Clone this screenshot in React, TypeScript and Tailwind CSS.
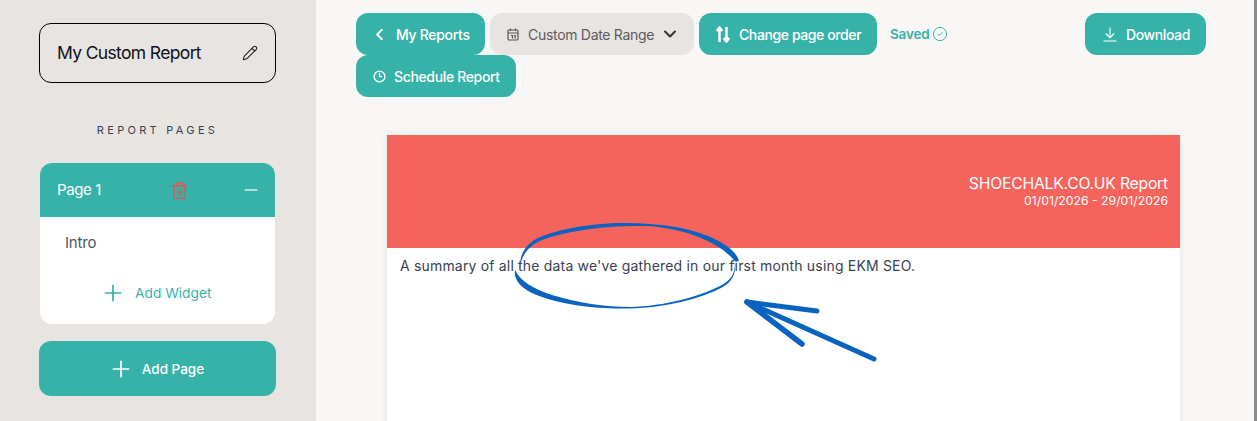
import { ChevronLeft, ChevronDown, Clock3, Pencil, Trash2, Minus, Plus, CircleCheck } from "lucide-react";

const teal = "bg-[#37b2a8]";

function TealButton({ children, className = "" }: { children: React.ReactNode; className?: string }) {
  return (
    <button className={`${teal} h-[42px] rounded-xl flex items-center text-white text-[14px] font-medium ${className}`}>
      {children}
    </button>
  );
}

// hand drawn circle and arrow on top of the report
function Annotation() {
  return (
    <svg className="absolute left-0 top-0 pointer-events-none" width="1257" height="421" fill="none">
      <path
        d="M739 261 C735 245 700 227 650 224 C600 220 560 229 540 237 C526 243 519 255 520 268 C521 256 528 246 542 240 C565 231 605 225 648 226 C688 229 720 243 735 261 Z"
        fill="#0a62c0"
      />
      <path
        d="M515 270 C513 284 528 293 548 299 C575 307 605 309 630 308.5 C665 307.5 700 299 722 287.5 C732 282 736 274 735 264 C735 274 730 281 720 286 C698 297 665 306 630 307 C605 307 578 303 552 295 C534 289 521 282 515 270 Z"
        fill="#0a62c0"
      />
      <path d="M720 247 C729 253 734 259 735 266" stroke="#0a62c0" strokeOpacity="0.35" strokeWidth="0.6" />
      <g stroke="#0a62c0" strokeLinecap="round" strokeLinejoin="round">
        <path d="M747 302 L817 311" strokeWidth="5" />
        <path d="M747 302 L802 344" strokeWidth="5.5" />
        <path d="M747 302 L874 359" strokeWidth="5" />
      </g>
    </svg>
  );
}

export default function App() {
  return (
    <div
      className="relative flex w-[1257px] h-[421px] overflow-hidden bg-[#f8f7f5]"
      style={{ fontFamily: '"Inter", "Liberation Sans", sans-serif' }}
    >
      {/* SIDEBAR */}
      <aside className="w-[316px] shrink-0 bg-[#e8e4e1] pt-[23px] pl-[39px] pr-[40px] flex flex-col">
        <div className="h-[60px] rounded-xl border border-black flex items-center justify-between pl-[17px] pr-[17px] text-[17.5px] tracking-[-0.65px] text-[#0b1220]">
          <span>My Custom Report</span>
          <Pencil size={16} strokeWidth={1.6} className="text-[#222]" />
        </div>

        <p className="mt-[40px] text-center text-[11px] leading-[14px] tracking-[3.3px] text-[#374151]">REPORT PAGES</p>

        <div className="mt-[26px] mx-px rounded-xl overflow-hidden bg-white">
          <div className={`${teal} h-[54px] flex items-center pl-[17px] pr-[14px] text-white text-[15px] tracking-[-0.4px]`}>
            <span className="w-[113px]">Page 1</span>
            <Trash2 size={19} strokeWidth={1.6} className="text-[#ea4f4f]" />
            <Minus size={20} strokeWidth={1.7} className="ml-auto text-white/80" />
          </div>
          <div className="h-[107px] pl-[25px] pt-[17px] flex flex-col">
            <span className="text-[15px] leading-[18px] tracking-[-0.2px] text-[#4b5563]">Intro</span>
            <div className="mt-[28px] ml-[35px] flex items-center gap-[9px] text-[#37b2a8] text-[13.75px]">
              <Plus size={26} strokeWidth={1.6} />
              <span>Add Widget</span>
            </div>
          </div>
        </div>

        <button className={`${teal} mt-[17px] h-[55px] rounded-xl flex items-center justify-center gap-[8px] pr-[3px] text-white text-[13.5px] font-medium`}>
          <Plus size={26} strokeWidth={1.6} />
          <span className="pt-[1px]">Add Page</span>
        </button>
      </aside>

      {/* MAIN */}
      <main className="flex-1 min-w-0">
        <div className="pl-[40px] pt-[13px] flex items-start">
          <div className="w-[729px] flex flex-wrap items-center gap-x-[5px]">
            <TealButton className="w-[129px] pl-[14px] gap-[7px]">
              <ChevronLeft size={19} strokeWidth={2.5} />
              <span className="tracking-[-0.3px]">My Reports</span>
            </TealButton>
            <button className="w-[204px] h-[42px] rounded-xl bg-[#e8e4e1] flex items-center pl-[17px] gap-[9px] text-[14px] tracking-[-0.3px] text-[#5b5b5e]">
              <svg width="12" height="13" viewBox="0 0 12 13" fill="none" stroke="#55555a" strokeWidth="1.2">
                <rect x="1" y="2" width="10" height="10" rx="1" />
                <path d="M1 5h10M3.5 .5v2.5M8.5 .5v2.5M4 7.5h1.5v3M7 7.5h1.2v3" />
              </svg>
              <span>Custom Date Range</span>
              <ChevronDown size={20} strokeWidth={2.5} className="text-[#333] -ml-[3px]" />
            </button>
            <TealButton className="w-[178px] pl-[17px] gap-[9px]">
              <svg width="14" height="17" viewBox="0 0 14 17" fill="none" stroke="white" strokeWidth="2.5">
                <path d="M3.5 16V2M.8 5l2.7-3.5L6.2 5M10.5 1v14M7.8 12l2.7 3.5 2.7-3.5" />
              </svg>
              <span className="tracking-[-0.4px]">Change page order</span>
            </TealButton>
            <span className="ml-[8px] flex items-center gap-[3px] text-[13.5px] font-semibold text-[#37b2a8] tracking-[-0.2px]">
              Saved
              <CircleCheck size={16} strokeWidth={1.5} />
            </span>
            <TealButton className="w-[160px] pl-[17px] gap-[8px]">
              <Clock3 size={13} strokeWidth={2.4} />
              <span className="tracking-[-0.35px]">Schedule Report</span>
            </TealButton>
          </div>
          <TealButton className="w-[121px] pl-[18px] gap-[9px]">
            <svg width="14" height="15" viewBox="0 0 14 15" fill="none" stroke="white" strokeWidth="1.1">
              <path d="M7 .5v10M2.8 6.5 7 10.7l4.2-4.2M.5 14h13" />
            </svg>
            <span className="tracking-[-0.4px]">Download</span>
          </TealButton>
        </div>

        <section className="mt-[38px] ml-[71px] w-[793px] h-[400px] bg-white shadow-[0_0_8px_rgba(0,0,0,0.08)]">
          <div className="h-[113px] bg-[#f4635c] flex flex-col items-end justify-center pr-[12px] text-white">
            <span className="text-[15.7px] leading-[18px] tracking-[-0.2px]">SHOECHALK.CO.UK Report</span>
            <span className="text-[12.25px] leading-[15px]">01/01/2026 - 29/01/2026</span>
          </div>
          <p className="pl-[13px] pt-[9px] text-[14px] leading-[18px] tracking-[0.18px] text-[#374151]">
            A summary of all the data we've gathered in our first month using EKM SEO.
          </p>
        </section>
      </main>

      <div className="w-[3px] shrink-0 bg-[#8a8a8a]" />

      <Annotation />
    </div>
  );
}
